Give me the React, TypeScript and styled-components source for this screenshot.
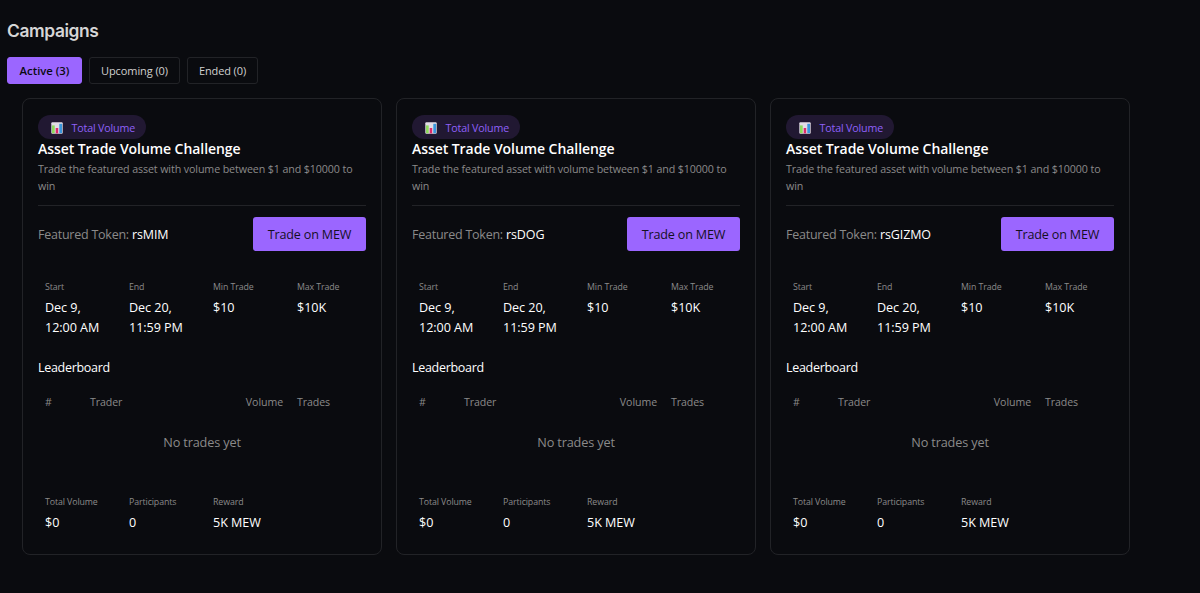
import React from "react";
import styled, { createGlobalStyle, css } from "styled-components";

const colors = {
  bg: "#0a0b0f",
  line: "#222327",
  accent: "#9b66ff",
  text: "#ffffff",
  muted: "#8a8a8a",
};

const GlobalStyle = createGlobalStyle`
  * { box-sizing: border-box; }
  body {
    margin: 0;
    background: ${colors.bg};
    color: ${colors.text};
    font-family: "Open Sans", "Noto Sans", sans-serif;
    overflow: hidden;
  }
  h1, h2, h3, p, dl, dt, dd { margin: 0; }
  button { font-family: inherit; cursor: pointer; }
`;

const Page = styled.main`
  min-height: 593px;
  padding: 18px 7px 0;
`;

const PageTitle = styled.h1`
  height: 39px;
  font: 600 17.4px/25px Inter, sans-serif;
  letter-spacing: -0.4px;
  color: #d6d6d6;
`;

const Tabs = styled.nav`
  display: flex;
  gap: 7px;
  padding-bottom: 14px;
`;

const Tab = styled.button<{ $active?: boolean; $width: number; $spacing: number }>`
  width: ${(p) => p.$width}px;
  height: 27px;
  padding: 0;
  border: 1px solid ${colors.line};
  border-radius: 3px;
  background: transparent;
  color: #d0d0d0;
  font-size: 11px;
  line-height: 25px;
  letter-spacing: ${(p) => p.$spacing}px;
  white-space: nowrap;
  ${(p) =>
    p.$active &&
    css`
      border-color: ${colors.accent};
      background: ${colors.accent};
      color: ${colors.bg};
      font-weight: 600;
      font-size: 11.3px;
    `}
`;

const CardGrid = styled.section`
  display: grid;
  grid-template-columns: repeat(3, 360px);
  gap: 14px;
  padding-left: 15px;
`;

const Card = styled.article`
  height: 457px;
  padding: 16px 15px 0;
  border: 1px solid ${colors.line};
  border-radius: 8px;
`;

const CardHeader = styled.header`
  height: 91px;
  border-bottom: 1px solid ${colors.line};
`;

const Badge = styled.span`
  display: flex;
  align-items: center;
  gap: 8.5px;
  width: 108px;
  height: 24px;
  padding: 1px 0 0 13px;
  border-radius: 12px;
  background: #211832;
  color: #8f60f8;
  font-size: 10.7px;
  letter-spacing: -0.16px;
  white-space: nowrap;
`;

const CardTitle = styled.h2`
  font-size: 14px;
  font-weight: 600;
  line-height: 20px;
  letter-spacing: -0.06px;
`;

const Description = styled.p`
  margin-top: 2px;
  color: ${colors.muted};
  font-size: 10.7px;
  line-height: 17px;
  letter-spacing: -0.11px;
`;

const TokenRow = styled.div`
  display: flex;
  align-items: center;
  justify-content: space-between;
  margin-top: 11px;
`;

const Token = styled.span`
  color: ${colors.muted};
  font-size: 12.5px;
  letter-spacing: -0.24px;

  strong {
    color: ${colors.text};
    font-weight: 400;
    letter-spacing: -0.1px;
  }
`;

const TradeButton = styled.button`
  width: 113px;
  height: 34px;
  padding: 0;
  border: 0;
  border-radius: 3px;
  background: ${colors.accent};
  color: #15101f;
  font-size: 12.6px;
  letter-spacing: -0.2px;
`;

const Stats = styled.dl<{ $top: number }>`
  display: grid;
  grid-template-columns: repeat(4, 84px);
  margin-top: ${(p) => p.$top}px;
  padding-left: 7px;
`;

const StatLabel = styled.dt`
  color: ${colors.muted};
  font-size: 8.8px;
  line-height: 14px;
  letter-spacing: -0.1px;
`;

const StatValue = styled.dd`
  margin-top: 4px;
  font-size: 12.6px;
  line-height: 20px;
  letter-spacing: -0.06px;
  white-space: pre-line;
`;

const SectionTitle = styled.h3`
  margin-top: 20px;
  font-size: 12.5px;
  font-weight: 400;
  line-height: 20px;
  letter-spacing: -0.3px;
`;

const TableHead = styled.div`
  display: grid;
  grid-template-columns: 45px 148px 45px auto;
  justify-content: start;
  margin-top: 15px;
  padding-left: 7px;
  color: ${colors.muted};
  font-size: 10.6px;
  line-height: 18px;
  letter-spacing: -0.08px;
`;

const HeadCell = styled.span<{ $end?: boolean }>`
  text-align: ${(p) => (p.$end ? "right" : "left")};

  &:last-child {
    padding-left: 14px;
  }
`;

const Empty = styled.p`
  margin-top: 21px;
  color: ${colors.muted};
  font-size: 12.7px;
  line-height: 20px;
  letter-spacing: -0.15px;
  text-align: center;
`;

const ChartIcon = () => (
  <svg width="12" height="12" viewBox="0 0 12 12" aria-hidden="true">
    <rect x="0.3" y="0.2" width="11.4" height="11.6" rx="1" fill="#e2dce6" />
    <rect x="1" y="3.4" width="2.7" height="7.8" fill="#8edb5c" />
    <rect x="4.7" y="6" width="2.5" height="5.4" fill="#dd2b6b" />
    <rect x="8.3" y="1.8" width="2.7" height="9.4" fill="#3a96dd" />
  </svg>
);

type StatItem = [label: string, value: string];

const schedule: StatItem[] = [
  ["Start", "Dec 9,\n12:00 AM"],
  ["End", "Dec 20,\n11:59 PM"],
  ["Min Trade", "$10"],
  ["Max Trade", "$10K"],
];

const totals: StatItem[] = [
  ["Total Volume", "$0"],
  ["Participants", "0"],
  ["Reward", "5K MEW"],
];

const StatList = ({ items, top }: { items: StatItem[]; top: number }) => (
  <Stats $top={top}>
    {items.map(([label, value]) => (
      <div key={label}>
        <StatLabel>{label}</StatLabel>
        <StatValue>{value}</StatValue>
      </div>
    ))}
  </Stats>
);

const CampaignCard = ({ token }: { token: string }) => (
  <Card>
    <CardHeader>
      <Badge>
        <ChartIcon />
        Total Volume
      </Badge>
      <CardTitle>Asset Trade Volume Challenge</CardTitle>
      <Description>Trade the featured asset with volume between $1 and $10000 to win</Description>
    </CardHeader>
    <TokenRow>
      <Token>
        Featured Token: <strong>{token}</strong>
      </Token>
      <TradeButton>Trade on MEW</TradeButton>
    </TokenRow>
    <StatList items={schedule} top={29} />
    <SectionTitle>Leaderboard</SectionTitle>
    <TableHead>
      <HeadCell>#</HeadCell>
      <HeadCell>Trader</HeadCell>
      <HeadCell $end>Volume</HeadCell>
      <HeadCell $end>Trades</HeadCell>
    </TableHead>
    <Empty>No trades yet</Empty>
    <StatList items={totals} top={43} />
  </Card>
);

export default function App() {
  return (
    <>
      <GlobalStyle />
      <Page>
        <PageTitle>Campaigns</PageTitle>
        <Tabs>
          <Tab $active $width={75} $spacing={0}>Active (3)</Tab>
          <Tab $width={91} $spacing={-0.08}>Upcoming (0)</Tab>
          <Tab $width={71} $spacing={-0.12}>Ended (0)</Tab>
        </Tabs>
        <CardGrid>
          {["rsMIM", "rsDOG", "rsGIZMO"].map((token) => (
            <CampaignCard key={token} token={token} />
          ))}
        </CardGrid>
      </Page>
    </>
  );
}
